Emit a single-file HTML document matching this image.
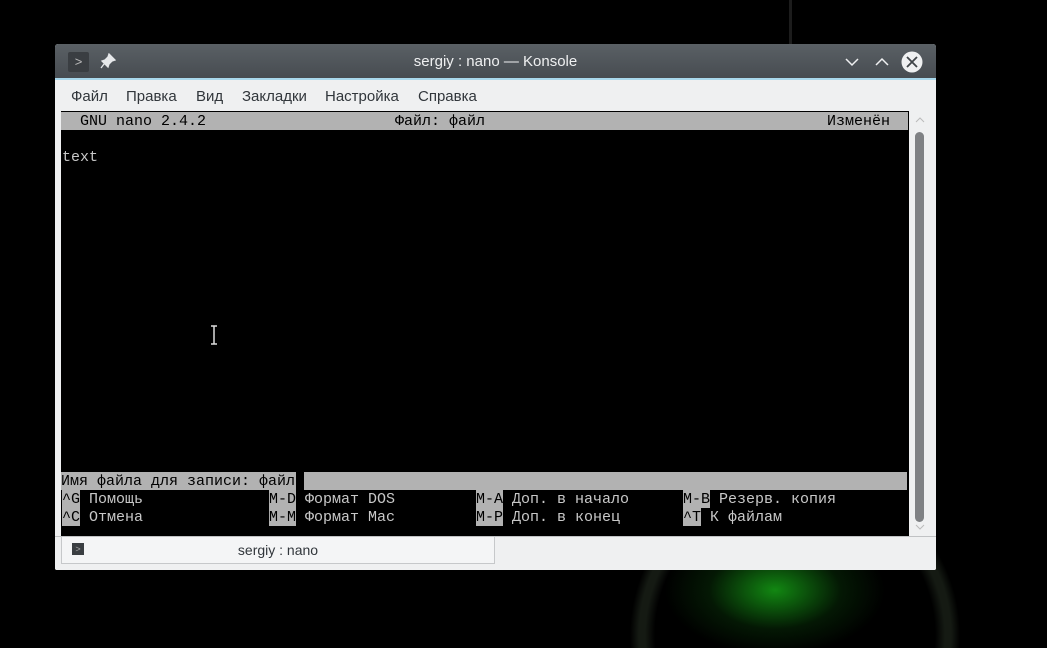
<!DOCTYPE html>
<html><head><meta charset="utf-8"><style>
*{margin:0;padding:0;box-sizing:border-box}
html,body{width:1047px;height:648px;overflow:hidden}
body{background:#000;position:relative;font-family:"Liberation Sans","DejaVu Sans",sans-serif}
.bg{position:absolute;left:0;top:0;width:1047px;height:648px;background:
radial-gradient(ellipse 110px 65px at 775px 590px,rgba(20,150,20,0.9),rgba(10,60,10,0.4) 60%,rgba(0,0,0,0) 100%),
radial-gradient(circle 165px at 795px 635px,rgba(0,0,0,0) 140px,rgba(60,75,55,0.35) 150px,rgba(60,75,55,0.35) 156px,rgba(0,0,0,0) 165px)}
.vline{position:absolute;left:789px;top:0;width:3px;height:44px;background:#1c1c1c}
.win{position:absolute;left:55px;top:44px;width:881px;height:526px;background:#eff0f1;border-radius:3px 3px 2px 2px;overflow:hidden}
.title{position:absolute;left:0;top:0;width:881px;height:36px;background:linear-gradient(#5a6065,#474c51);border-bottom:2px solid #a9d8ec}
.title .t{position:absolute;left:0;right:0;top:9px;text-align:center;color:#eff0f1;font-size:15px}
.menu{position:absolute;top:44px;font-size:15px;color:#31363b}
.term{position:absolute;left:6px;top:67px;width:848px;height:425px;background:#000}
.term span{position:absolute;height:18px;line-height:19px;white-space:pre;font-family:"Liberation Mono","DejaVu Sans Mono",monospace;font-size:15px;color:#c8c8c8}
.term .h{background:#b2b2b2;color:#000}
.sb{position:absolute;left:860px;top:88px;width:9px;height:390px;background:#7f8184;border-radius:5px}
.tabbar{position:absolute;left:0;top:492px;width:881px;height:34px;background:#eff0f1;border-top:1px solid #c0c2c4}
.tab{position:absolute;left:6px;top:0;width:434px;height:27px;background:#f4f5f6;border:1px solid #c6c8ca;border-top:none;text-align:center;line-height:26px;font-size:14px;color:#31363b}
</style></head><body>
<div class="bg"></div><div class="vline"></div>
<div class="win">
 <div class="title">
  <div style="position:absolute;left:13px;top:8px;width:21px;height:20px;background:#3a3e42;border-radius:2px;color:#bbb;font-size:13px;text-align:center;line-height:19px">&gt;</div>
  <svg style="position:absolute;left:45px;top:9px" width="16" height="16" viewBox="0 0 16 16"><path d="M9 1 L15 7 L12 8 L9 11 L8 14 L2 8 L5 7 L8 4 Z M4 11 L1 15" fill="#e6e8ea" stroke="#e6e8ea" stroke-width="1.3"/></svg>
  <div class="t">sergiy : nano — Konsole</div>
  <svg style="position:absolute;left:789px;top:11px" width="16" height="14"><path d="M2 4 L8 10 L14 4" fill="none" stroke="#eff0f1" stroke-width="1.5"/></svg>
  <svg style="position:absolute;left:819px;top:11px" width="16" height="14"><path d="M2 10 L8 4 L14 10" fill="none" stroke="#eff0f1" stroke-width="1.5"/></svg>
  <svg style="position:absolute;left:846px;top:7px" width="22" height="22"><circle cx="11" cy="11" r="10.5" fill="#eff0f1"/><path d="M6 6 L16 16 M16 6 L6 16" stroke="#3f4448" stroke-width="1.8"/></svg>
 </div>
 <div class="menu" style="left:16px">Файл</div>
 <div class="menu" style="left:71px">Правка</div>
 <div class="menu" style="left:141px">Вид</div>
 <div class="menu" style="left:187px">Закладки</div>
 <div class="menu" style="left:270px">Настройка</div>
 <div class="menu" style="left:363px">Справка</div>
 <div class="term">
  <span class="h" style="left:0;top:1px;width:847px"></span>
  <span class="h" style="left:19px;top:1px">GNU nano 2.4.2</span>
  <span class="h" style="left:334px;top:1px">Файл: файл</span>
  <span class="h" style="left:766px;top:1px">Изменён</span>
  <span style="left:1px;top:37px">text</span>
  <span class="h" style="left:0;top:361px;width:846px">Имя файла для записи: файл</span>
  <span style="left:235px;top:361px;width:8px;background:#000"> </span>
  <span class="h" style="left:1px;top:379px">^G</span><span style="left:19px;top:379px"> Помощь</span>
  <span class="h" style="left:208px;top:379px">M-D</span><span style="left:235px;top:379px"> Формат DOS</span>
  <span class="h" style="left:415px;top:379px">M-A</span><span style="left:442px;top:379px"> Доп. в начало</span>
  <span class="h" style="left:622px;top:379px">M-B</span><span style="left:649px;top:379px"> Резерв. копия</span>
  <span class="h" style="left:1px;top:397px">^C</span><span style="left:19px;top:397px"> Отмена</span>
  <span class="h" style="left:208px;top:397px">M-M</span><span style="left:235px;top:397px"> Формат Mac</span>
  <span class="h" style="left:415px;top:397px">M-P</span><span style="left:442px;top:397px"> Доп. в конец</span>
  <span class="h" style="left:622px;top:397px">^T</span><span style="left:640px;top:397px"> К файлам</span>
 </div>
 <svg style="position:absolute;left:859px;top:71px" width="12" height="10"><path d="M2 7 L6 3 L10 7" fill="none" stroke="#bbb" stroke-width="1"/></svg>
 <div class="sb"></div>
 <svg style="position:absolute;left:859px;top:478px" width="12" height="10"><path d="M2 3 L6 7 L10 3" fill="none" stroke="#bbb" stroke-width="1"/></svg>
 <div class="tabbar"><div class="tab"><div style="position:absolute;left:10px;top:6px;width:12px;height:12px;background:#3a3e42;color:#aaa;font-size:9px;line-height:12px">&gt;</div>sergiy : nano</div></div>
</div>
<svg style="position:absolute;left:209px;top:325px" width="10" height="20"><path d="M2 1 H8 M5 1 V19 M2 19 H8" stroke="#ddd" stroke-width="1.5" fill="none"/></svg>
</body></html>
